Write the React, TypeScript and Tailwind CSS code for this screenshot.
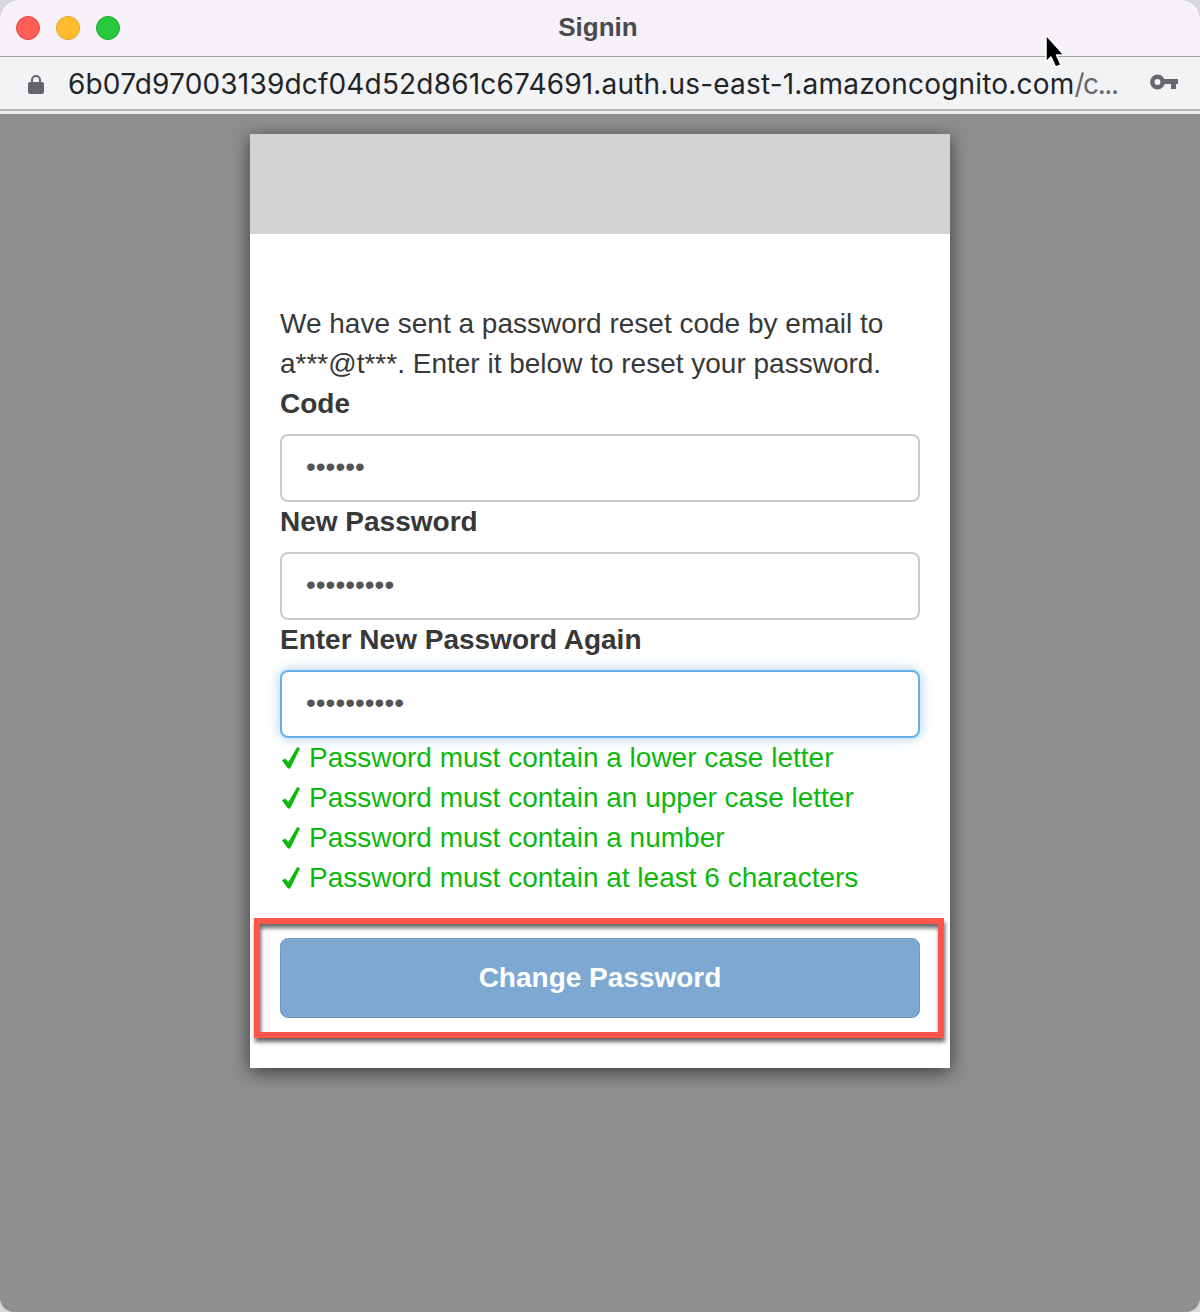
const checks = [
  "Password must contain a lower case letter",
  "Password must contain an upper case letter",
  "Password must contain a number",
  "Password must contain at least 6 characters",
];

function Field({ label, dots, focus }: { label: string; dots: number; focus?: boolean }) {
  return (
    <div>
      <div className="h-[40px] text-[28px] leading-[40px] font-bold">{label}</div>
      <div
        className={
          focus
            ? "mt-[10px] flex h-[68px] items-center rounded-[8px] border-2 border-[#66afe9] bg-white px-[24px] shadow-[0_0_12px_rgba(102,175,233,0.6)]"
            : "mt-[10px] flex h-[68px] items-center rounded-[8px] border-2 border-[#cccccc] bg-white px-[24px]"
        }
      >
        <span className="-mt-[2px] text-[28px] leading-none text-[#555555]">{"•".repeat(dots)}</span>
      </div>
    </div>
  );
}

export default function App() {
  return (
    <div className="relative h-[1312px] w-[1200px] overflow-hidden bg-[#d8d8d8] font-['Liberation_Sans',Arial,sans-serif]">
      <div className="flex h-full flex-col overflow-hidden rounded-t-[18px] rounded-b-[14px] bg-[#8f8f8f]">
        {/* title bar */}
        <div className="relative flex h-[57px] shrink-0 items-center justify-center border-b border-[#a3a3a3] bg-[#f7f2f9]">
          <div className="absolute top-[16px] left-[16px] flex gap-[16px]">
            <span className="h-[24px] w-[24px] rounded-full border border-[#e2463f] bg-[#ff5f57]" />
            <span className="h-[24px] w-[24px] rounded-full border border-[#e1a325] bg-[#febc2e]" />
            <span className="h-[24px] w-[24px] rounded-full border border-[#1aab29] bg-[#28c83f]" />
          </div>
          <span className="mr-[4px] mb-[2px] text-[26px] font-bold text-[#4b4a4f]">Signin</span>
        </div>
        {/* url bar */}
        <div className="flex h-[52px] shrink-0 items-center bg-[#f2f3f5] pr-[22px] pl-[28px]">
          <svg width="16" height="20" viewBox="0 0 16 20" className="mt-[2px] shrink-0">
            <path d="M4 9V6a4 4 0 0 1 8 0v3" fill="none" stroke="#63656a" strokeWidth="2" />
            <rect x="0" y="8" width="16" height="12" rx="2" fill="#63656a" />
          </svg>
          <span className="mt-[2px] ml-[24px] font-['Inter',sans-serif] text-[28px] tracking-[0.18px] whitespace-nowrap text-[#232427]">
            6b07d97003139dcf04d52d861c674691.auth.us-east-1.amazoncognito.com
            <span className="tracking-[-1.4px] text-[#66676b]">/c...</span>
          </span>
          <svg width="28" height="16" viewBox="0 0 28 16" className="mb-[2px] ml-auto shrink-0">
            <circle cx="7.5" cy="8" r="5.2" fill="none" stroke="#67686b" strokeWidth="4.500" />
            <path d="M12 5h16v5h-2v5h-5v-5h-9z" fill="#67686b" />
          </svg>
        </div>
        <div className="h-[2px] shrink-0 bg-[#b5b5b5]" />
        <div className="h-[3px] shrink-0 bg-[#ececec]" />
        {/* page */}
        <div className="flex flex-1 justify-center pt-[20px]">
          <div className="relative h-[934px] w-[700px] bg-white text-[#383838] shadow-[0_4px_18px_rgba(0,0,0,0.6)]">
            <div className="h-[100px] bg-[#d3d3d3]" />
            <div className="px-[30px] pt-[70px]">
              <p className="text-[28px] leading-[40px]">
                We have sent a password reset code by email to a***@t***. Enter it below to reset your password.
              </p>
              <Field label="Code" dots={6} />
              <Field label="New Password" dots={9} />
              <Field label="Enter New Password Again" dots={10} focus />
              <ul className="text-[28px] leading-[40px] text-[#0cb80c]">
                {checks.map((c) => (
                  <li key={c} className="flex items-center">
                    <svg width="18" height="22" viewBox="0 0 18 22" className="mr-[11px] ml-[1.500px] shrink-0">
                      <path d="M0 13.500 3 11.500 6.500 15 15.200 0 18 1.200 8.200 21.500 6 21.500 Z" fill="#0cb80c" />
                    </svg>
                    <span className="-ml-[1.500px]">{c}</span>
                  </li>
                ))}
              </ul>
              <button className="mt-[40px] flex h-[80px] w-full items-center justify-center rounded-[8px] border border-[#7099c0] bg-[#7ca8d1] text-[28px] font-bold text-white">
                Change Password
              </button>
            </div>
            {/* highlight annotation */}
            <div className="absolute top-[784px] left-[4px] h-[120px] w-[690px] border-[6px] border-[#fd5549] shadow-[1px_4px_4px_rgba(0,0,0,0.6),inset_1px_4px_4px_rgba(0,0,0,0.6)]" />
          </div>
        </div>
      </div>
      {/* cursor */}
      <svg width="24" height="36" viewBox="0 0 24 36" className="absolute top-[34px] left-[1044px]">
        <path
          d="M2 1 20 21H12.500L17 31 11.500 33 7 23 2 28Z"
          fill="#000"
          stroke="#fff"
          strokeWidth="1.500"
          strokeLinejoin="round"
        />
      </svg>
    </div>
  );
}
